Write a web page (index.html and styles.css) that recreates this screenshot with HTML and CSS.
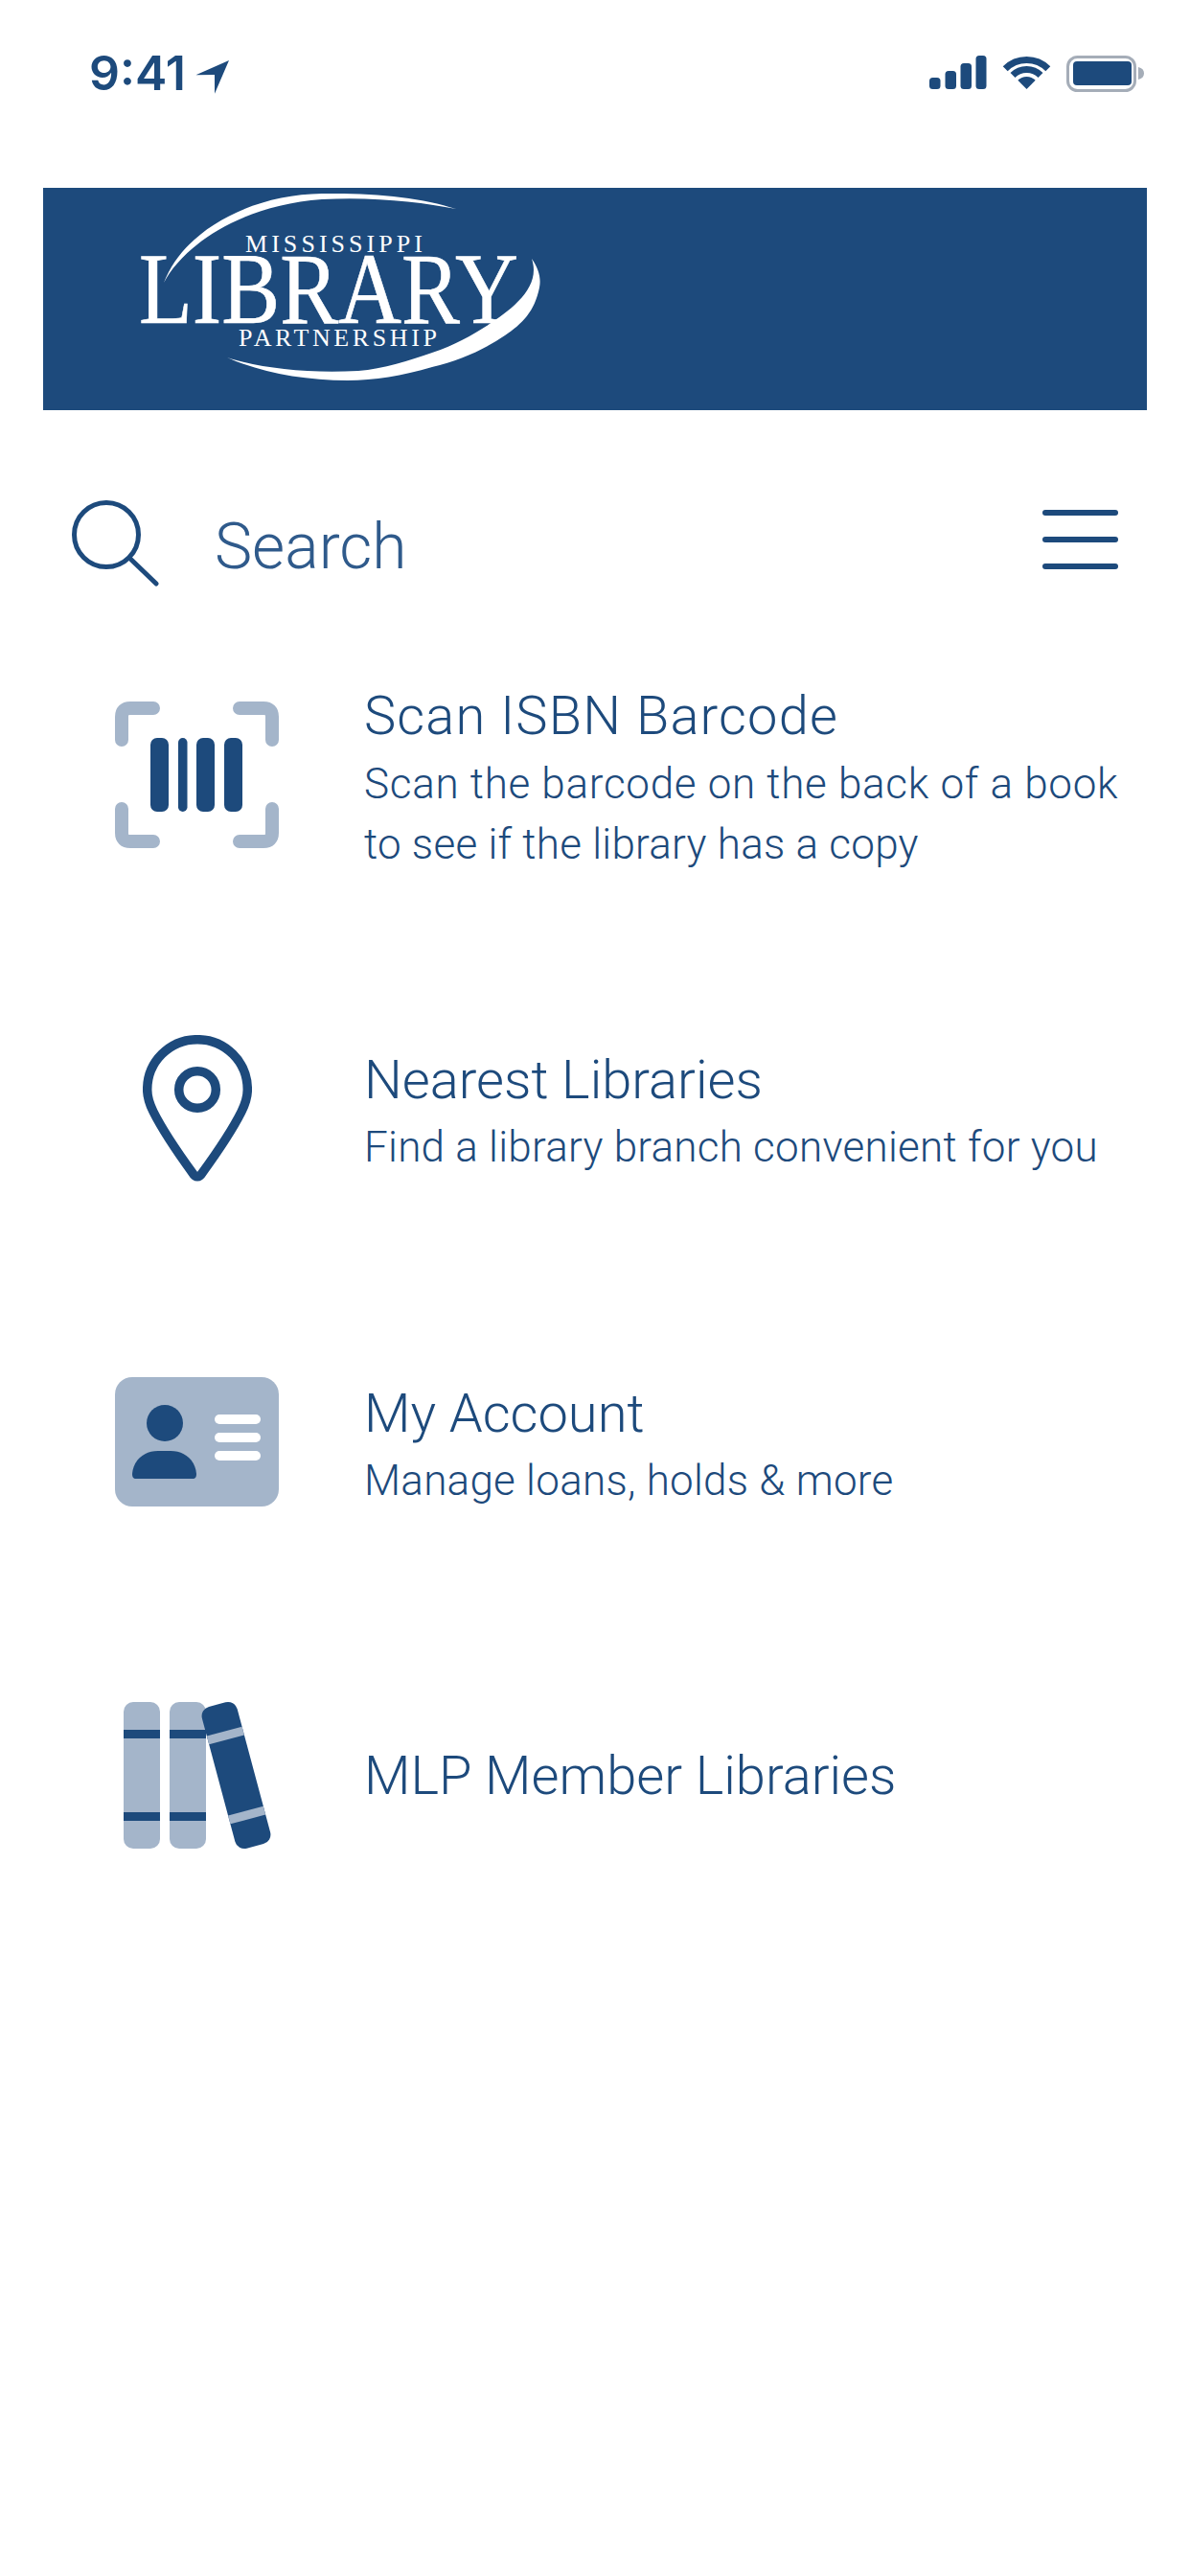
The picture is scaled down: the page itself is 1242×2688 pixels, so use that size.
FILE: index.html
```html
<!DOCTYPE html>
<html lang="en">
<head>
    <meta charset="UTF-8">
    <meta name="viewport" content="width=device-width, initial-scale=1.0">
    <title>Mississippi Library Partnership</title>
    <link rel="stylesheet" href="styles.css">
</head>
<body>
    <div class="status">
        <div class="time-wrap">
            <span class="time">9:41</span>
            <svg class="arrow" width="35" height="35" viewBox="204 63 35 35"><polygon points="204.4,78.3 239,63 224,97.7 224,78"/></svg>
        </div>
        <div class="status-icons">
            <svg width="60" height="35" viewBox="971 58 60 35">
                <rect x="971" y="81" width="11.5" height="12" rx="3.5"/>
                <rect x="987.5" y="74" width="11.5" height="19" rx="3.5"/>
                <rect x="1003.5" y="66" width="11.5" height="27" rx="3.5"/>
                <rect x="1019.5" y="58" width="11" height="35" rx="3.5"/>
            </svg>
            <svg class="wifi" width="51" height="35" viewBox="0 0 51 35">
                <path class="wifi-arc" d="M3.2 13.7A31.5 31.5 0 0 1 47.8 13.7"/>
                <path class="wifi-arc" d="M11 20.5A20.5 20.5 0 0 1 40 20.5"/>
                <path d="M16.3 25.8A13 13 0 0 1 34.7 25.8L25.5 35Z"/>
            </svg>
            <svg width="81" height="38" viewBox="1113 58 81 38">
                <rect class="batt-edge" x="1114.5" y="59.5" width="70" height="35" rx="10"/>
                <rect x="1120" y="64" width="61" height="25" rx="4"/>
                <path class="batt-nub" d="M1188 70c4 1 6 3 6 6.500s-2 5.500-6 6.500z"/>
            </svg>
        </div>
    </div>

    <div class="banner">
        <svg class="logo" width="440" height="232" viewBox="145 196 440 232">
            <path d="M476 218C440 206 390 201 336 202C262 203 192 240 171 295C190 258 250 214 336 208C390 205 440 211 476 218Z"/>
            <path d="M555 270C562 280 565 290 563 300C558 325 545 338 527 350C505 365 480 376 451 383C420 392 390 397 363 397C315 397 270 388 237 373C270 384 320 390 374 387C400 385 428 376 451 368C475 360 492 350 508 340C535 322 565 300 555 270Z"/>
            <text x="256" y="263" font-size="26" textLength="185">MISSISSIPPI</text>
            <text class="logo-main" x="145" y="337" font-size="105" textLength="396" lengthAdjust="spacingAndGlyphs">LIBRARY</text>
            <text x="249" y="361" font-size="26" textLength="207">PARTNERSHIP</text>
        </svg>
    </div>

    <div class="search-row">
        <svg class="search-icon" width="92" height="98" viewBox="75 514 92 98">
            <circle cx="111" cy="558" r="33.500"/>
            <line x1="137" y1="584" x2="163" y2="609"/>
        </svg>
        <div class="search-label">Search</div>
        <div class="menu">
            <span></span>
            <span></span>
            <span></span>
        </div>
    </div>

    <div class="item">
        <div class="item-icon">
            <svg width="171" height="153" viewBox="120 732 171 153">
                <path class="pale-line" d="M160 739H136Q127 739 127 748V772M250 739H275Q284 739 284 748V772M160 878H136Q127 878 127 869V844M250 878H275Q284 878 284 869V844"/>
                <rect class="dark" x="157" y="770" width="19" height="77" rx="7"/>
                <rect class="dark" x="186" y="770" width="9.500" height="77" rx="4.700"/>
                <rect class="dark" x="205" y="770" width="19" height="77" rx="7"/>
                <rect class="dark" x="234" y="770" width="19" height="77" rx="7"/>
            </svg>
        </div>
        <div class="item-text">
            <div class="item-title title-wide">Scan ISBN Barcode</div>
            <div class="item-sub"><span class="wide">Scan the barcode on the back of a book</span><br>to see if the library has a copy</div>
        </div>
    </div>

    <div class="item">
        <div class="item-icon">
            <svg width="114" height="153" viewBox="148 1080 114 153">
                <path class="pin" d="M205 1084.700C176 1084.700 152.700 1108 152.700 1137C152.700 1146 155 1152 159 1160C170 1182 184 1202 200 1224C203 1229 207 1229 210 1224C226 1202 240 1182 251 1160C255 1152 257.300 1146 257.300 1137C257.300 1108 234 1084.700 205 1084.700Z"/>
                <circle class="pin" cx="205" cy="1137" r="19.300"/>
            </svg>
        </div>
        <div class="item-text">
            <div class="item-title">Nearest Libraries</div>
            <div class="item-sub">Find a library branch convenient for you</div>
        </div>
    </div>

    <div class="item">
        <div class="item-icon">
            <svg width="171" height="135" viewBox="120 1437 171 135">
                <rect class="pale" x="120" y="1437" width="171" height="135" rx="18"/>
                <circle class="dark" cx="172" cy="1485" r="19"/>
                <path class="dark" d="M138 1538C139 1524 150 1514 165 1514H178C193 1514 204 1524 205 1538C205 1541 204 1543 201 1543H142C139 1543 138 1541 138 1538Z"/>
                <rect class="light" x="224" y="1476" width="48" height="10" rx="5"/>
                <rect class="light" x="224" y="1495" width="48" height="10" rx="5"/>
                <rect class="light" x="224" y="1514" width="48" height="10" rx="5"/>
            </svg>
        </div>
        <div class="item-text">
            <div class="item-title">My Account</div>
            <div class="item-sub">Manage loans, holds &amp; more</div>
        </div>
    </div>

    <div class="item">
        <div class="item-icon">
            <svg width="171" height="155" viewBox="120 1775 171 155">
                <rect class="pale" x="129" y="1776" width="38" height="153" rx="10"/>
                <rect class="pale" x="177" y="1776" width="38" height="153" rx="10"/>
                <rect class="dark" x="129" y="1805" width="38" height="9"/>
                <rect class="dark" x="129" y="1891" width="38" height="9"/>
                <rect class="dark" x="177" y="1805" width="38" height="9"/>
                <rect class="dark" x="177" y="1891" width="38" height="9"/>
                <g transform="rotate(-15 246.500 1852.500)">
                    <rect class="dark" x="227.500" y="1776" width="38" height="153" rx="10"/>
                    <rect class="pale" x="227.500" y="1805" width="38" height="9"/>
                    <rect class="pale" x="227.500" y="1891" width="38" height="9"/>
                </g>
            </svg>
        </div>
        <div class="item-text">
            <div class="item-title">MLP Member Libraries</div>
        </div>
    </div>
</body>
</html>
```

FILE: styles.css
```css
body {
    margin: 0;
    background-color: #fff;
    color: #1d4a7c;
    font-family: Roboto, "Liberation Sans", sans-serif;
    font-weight: 300;
}
svg {
    display: block;
    fill: #1d4a7c;
}
.status {
    display: flex;
    justify-content: space-between;
    align-items: flex-start;
    height: 138px;
    padding: 58px 48px 0 93px;
}
.time-wrap {
    display: flex;
}
.time {
    font-family: Inter, sans-serif;
    font-size: 50px;
    font-weight: 600;
    line-height: 37px;
    width: 111px;
}
.arrow {
    margin-top: 5px;
}
.status-icons {
    display: flex;
    gap: 16px;
}
.wifi-arc {
    fill: none;
    stroke: #1d4a7c;
    stroke-width: 7;
}
.batt-edge {
    fill: none;
    stroke: #a5adb8;
    stroke-width: 3;
}
.batt-nub {
    fill: #a5adb8;
}
.banner {
    height: 232px;
    margin: 0 45px;
    padding-left: 100px;
    background-color: #1d4a7c;
}
.logo {
    fill: #fff;
    font-family: "Liberation Serif", serif;
    font-weight: 400;
}
.logo-main {
    stroke: #fff;
    stroke-width: 0.6;
}
.search-row {
    display: flex;
    align-items: center;
    height: 142px;
    padding: 64px 75px 0 75px;
}
.search-label {
    flex: 1;
    margin-left: 57px;
    padding-top: 14px;
    font-size: 66px;
    color: #2f5a8b;
}
.search-icon circle, .search-icon line {
    fill: none;
    stroke: #1d4a7c;
    stroke-width: 5;
    stroke-linecap: round;
}
.menu {
    display: flex;
    flex-direction: column;
    gap: 22px;
    width: 79px;
}
.menu span {
    display: block;
    height: 6px;
    border-radius: 3px;
    background-color: #1d4a7c;
}
.item {
    display: flex;
    align-items: center;
    height: 348px;
    padding-left: 120px;
}
.item-icon {
    display: flex;
    justify-content: center;
    width: 171px;
    margin-right: 89px;
}
.item-title {
    padding-top: 2px;
    font-size: 56px;
    line-height: 70px;
}
.title-wide {
    letter-spacing: 1.15px;
}
.item-sub {
    margin: 4.5px 0 -6.5px;
    font-size: 44px;
    line-height: 63px;
    letter-spacing: 0.25px;
}
.wide {
    letter-spacing: 0.7px;
}
.dark {
    fill: #1d4a7c;
}
.pale {
    fill: #a4b5ca;
}
.light {
    fill: #fff;
}
.pale-line {
    fill: none;
    stroke: #a4b5ca;
    stroke-width: 14;
    stroke-linecap: round;
}
.pin {
    fill: none;
    stroke: #1d4a7c;
    stroke-width: 9.500;
}
```
